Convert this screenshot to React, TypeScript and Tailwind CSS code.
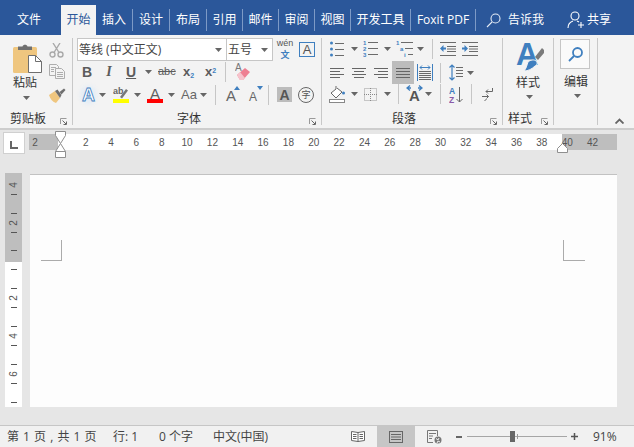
import type { ReactNode } from 'react';

const tabs = [
  { label: '插入', w: 'w-[37px]' },
  { label: '设计', w: 'w-[37px]' },
  { label: '布局', w: 'w-[37px]' },
  { label: '引用', w: 'w-[36px]' },
  { label: '邮件', w: 'w-[36px]' },
  { label: '审阅', w: 'w-[36px]' },
  { label: '视图', w: 'w-[36px]' },
  { label: '开发工具', w: 'w-[60px]' },
  { label: 'Foxit PDF', w: 'w-[65px]' },
];

const rulerNumbers = ['2', '', '2', '4', '6', '8', '10', '12', '14', '16', '18', '20', '22', '24', '26', '28', '30', '32', '34', '36', '38', '40', '42'];
const sideRuler = ['4', '-', '', '-', '2', '-', '', '-', '', '-', '', '-', '2', '-', '', '-', '4', '-', '', '-', '6', '-', '', '-'];

const BLUE = '#3f7fbf';
const GRAY = '#6b6b6b';

function Caret({ className = '' }: { className?: string }) {
  return (
    <svg width="7" height="4" viewBox="0 0 7 4" className={`shrink-0 ${className}`}>
      <path d="M0 0h7L3.5 4z" fill="#666" />
    </svg>
  );
}

function Sep({ className = '' }: { className?: string }) {
  return <div className={`w-px h-[20px] bg-[#c6c6c6] shrink-0 ${className}`} />;
}

function Launcher() {
  return (
    <svg width="7" height="7" viewBox="0 0 7 7" className="ml-auto mr-[5px] mt-[6px]">
      <path d="M.5 6V.5H6.5" fill="none" stroke="#9a9a9a" />
      <path d="M2.5 2.5 6 6M6.5 3.5v3h-3" fill="none" stroke="#666" />
    </svg>
  );
}

function GroupLabel({ text, pl }: { text: string; pl: string }) {
  return (
    <div className={`mt-auto -mb-px h-[15px] flex items-center text-[12px] leading-[15px] text-[#333] ${pl}`}>
      <span>{text}</span>
      <Launcher />
    </div>
  );
}

function Lines({ w, ys, xs, color = GRAY }: { w: number; ys: number[]; xs?: number[]; color?: string }) {
  return (
    <>
      {ys.map((y, i) => (
        <path key={i} d={`M${xs ? xs[i] : 0} ${y + 0.5}H${w}`} stroke={color} />
      ))}
    </>
  );
}

function Letter({ children, className = '' }: { children: ReactNode; className?: string }) {
  return <span className={`shrink-0 font-['Liberation_Sans',sans-serif] leading-none text-center ${className}`}>{children}</span>;
}

function PasteIcon() {
  return (
    <svg width="29" height="30" viewBox="0 0 29 30">
      <rect x="0" y="4" width="24" height="26" rx="1.5" fill="#efc67f" />
      <path d="M5 5V3.5h4.5C10 1 14 1 14.5 3.5H19V7H5z" fill="#6f6f6f" />
      <path d="M15.5 12.5h7l6 6v11h-13z" fill="#fff" stroke="#6f6f6f" />
      <path d="M22.5 12.5v6h6" fill="none" stroke="#6f6f6f" />
    </svg>
  );
}

function ScissorsIcon() {
  return (
    <svg width="15" height="15" viewBox="0 0 15 15" fill="none" stroke="#a9a9a9" strokeWidth="1.4">
      <circle cx="3.5" cy="11.5" r="2.5" />
      <circle cx="11.5" cy="11.5" r="2.5" />
      <path d="M5 9.5 11 0M10 9.5 4 0" />
    </svg>
  );
}

function CopyIcon() {
  return (
    <svg width="16" height="15" viewBox="0 0 16 15" fill="#f3f3f3" stroke="#adadad">
      <path d="M.5.5h7l2 2v9H.5z" />
      <path d="M6.5 4.5h6l3 3v7h-9z" />
      <path d="M2 3.5h5M2 5.5h3M2 7.5h3M8 8.5h6M8 10.5h6M8 12.5h6" strokeWidth="1" />
    </svg>
  );
}

function PainterIcon() {
  return (
    <svg width="17" height="15" viewBox="0 0 17 15">
      <path d="M0 7 6 3l5 7-4 5C4 14 1 11 0 7z" fill="#efc67f" />
      <path d="M6 3 8.5 1.5l4 5.5L11 10z" fill="#6f6f6f" />
      <path d="M10.5 4 15 .5l1.5 1.5-4 4.5z" fill="#6f6f6f" />
    </svg>
  );
}

function WordArtA() {
  return (
    <span className="w-[15px] h-[18px] shrink-0 relative flex items-center justify-center">
      <span className="absolute inset-0 rounded-full bg-[#e2ecf6] blur-[2px]" />
      <Letter className="relative text-[18px] font-bold text-white [-webkit-text-stroke:0.8px_#3f7fbf]">A</Letter>
    </span>
  );
}

function HighlightIcon() {
  return (
    <svg width="16" height="17" viewBox="0 0 16 17" className="shrink-0">
      <text x="0" y="8" fontSize="9" fontWeight="700" fill="#666" fontFamily="Liberation Sans">ab</text>
      <path d="M7 11 13 3l2 1.5-6 8z" fill="#777" />
      <rect x="0" y="13" width="16" height="4" fill="#ffff00" />
    </svg>
  );
}

function ColorA() {
  return (
    <span className="w-[16px] h-[17px] shrink-0 flex flex-col items-center">
      <Letter className="text-[15px] h-[13px] text-[#5f5f5f]">A</Letter>
      <span className="w-[16px] h-[4px] bg-[#ff0000]" />
    </span>
  );
}

function GrowA({ size, down }: { size: string; down?: boolean }) {
  return (
    <span className="relative w-[14px] h-[17px] shrink-0 flex items-end">
      <Letter className={`${size} text-[#666]`}>A</Letter>
      <svg width="6" height="4" viewBox="0 0 6 4" className="absolute right-0 top-0">
        <path d={down ? 'M0 0h6L3 4z' : 'M3 0l3 4H0z'} fill={BLUE} />
      </svg>
    </span>
  );
}

function EraserIcon() {
  return (
    <svg width="16" height="20" viewBox="0 0 16 20" className="shrink-0">
      <text x="0" y="9" fontSize="10" fill="#777" fontFamily="Liberation Sans">A</text>
      <path d="M2 13 10 6l5 4-7 8H5z" fill="#ee7f92" />
      <path d="M2 13l3 5h3l2-2-5-6z" fill="#f6c3cc" />
    </svg>
  );
}

function BulletsIcon() {
  return (
    <svg width="14" height="16" viewBox="0 0 14 16" className="shrink-0">
      <circle cx="1.5" cy="2" r="1.5" fill={BLUE} />
      <circle cx="1.5" cy="8" r="1.5" fill={BLUE} />
      <circle cx="1.5" cy="14" r="1.5" fill={BLUE} />
      <Lines w={14} ys={[2, 8, 14]} xs={[5, 5, 5]} />
    </svg>
  );
}

function NumberingIcon() {
  return (
    <svg width="15" height="17" viewBox="0 0 15 17" className="shrink-0" fontSize="6" fontWeight="700" fontFamily="Liberation Sans" fill={BLUE}>
      <text x="0" y="5">1</text>
      <text x="0" y="11">2</text>
      <text x="0" y="17">3</text>
      <Lines w={15} ys={[2, 8, 14]} xs={[5, 5, 5]} />
    </svg>
  );
}

function MultilevelIcon() {
  return (
    <svg width="17" height="17" viewBox="0 0 17 17" className="shrink-0" fontSize="6" fontWeight="700" fontFamily="Liberation Sans" fill={BLUE}>
      <text x="0" y="5">1</text>
      <text x="4" y="11">a</text>
      <text x="8" y="17">i</text>
      <Lines w={17} ys={[2, 8, 14]} xs={[5, 9, 12]} />
    </svg>
  );
}

function IndentIcon({ flip }: { flip?: boolean }) {
  return (
    <svg width="16" height="14" viewBox="0 0 16 14" className="shrink-0">
      <Lines w={16} ys={[0, 13]} />
      <Lines w={16} ys={[4, 6.5, 9]} xs={[7, 7, 7]} />
      <path d={flip ? 'M6 6.5 2.5 3v2.5H0v2h2.5V10z' : 'M0 6.5 3.5 3v2.5H6v2H3.5V10z'} fill={BLUE} />
    </svg>
  );
}

function AlignIcon({ xs }: { xs: number[] }) {
  return (
    <svg width="14" height="12" viewBox="0 0 14 12" className="shrink-0">
      <path d={`M${xs[0]} 1.5H${xs[1]}M${xs[2]} 4.5H${xs[3]}M${xs[0]} 7.5H${xs[1]}M${xs[2]} 10.5H${xs[3]}`} stroke="#666" />
    </svg>
  );
}

function DistributedIcon() {
  return (
    <svg width="16" height="17" viewBox="0 0 16 17" className="shrink-0">
      <path d="M.5 0v17M15.5 0v17" stroke={BLUE} />
      <path d="M3 3.5h10M3 3.5l2-2M3 3.5l2 2M13 3.5l-2-2M13 3.5l-2 2" stroke={BLUE} fill="none" />
      <Lines w={14} ys={[7, 9, 11, 13, 15]} xs={[2, 2, 2, 2, 2]} />
    </svg>
  );
}

function SpacingIcon() {
  return (
    <svg width="14" height="17" viewBox="0 0 14 17" className="shrink-0">
      <path d="M3 1v15M.5 3.5 3 1l2.5 2.5M.5 13.5 3 16l2.5-2.5" stroke={BLUE} fill="none" strokeWidth="1.2" />
      <Lines w={14} ys={[3, 6, 9, 12]} xs={[7, 7, 7, 7]} />
    </svg>
  );
}

function ShadingIcon() {
  return (
    <svg width="16" height="17" viewBox="0 0 16 17" className="shrink-0">
      <path d="M7 0v3L2 7l5 5 6-6-5-4" fill="#fff" stroke="#666" />
      <circle cx="14.5" cy="7" r="1.5" fill={BLUE} />
      <rect x=".5" y="13.5" width="15" height="3" fill="#fff" stroke="#888" />
    </svg>
  );
}

function BorderIcon() {
  return (
    <svg width="13" height="13" viewBox="0 0 13 13" className="shrink-0">
      <rect x=".5" y=".5" width="12" height="12" fill="none" stroke="#999" strokeDasharray="1 1" />
      <path d="M6.5 0v13M0 6.5h13" stroke="#888" strokeDasharray="1 1" />
    </svg>
  );
}

function TextDirIcon() {
  return (
    <span className="relative w-[17px] h-[18px] shrink-0 flex justify-center items-end">
      <Letter className="text-[15px] font-bold text-[#555]">A</Letter>
      <svg width="17" height="7" viewBox="0 0 17 7" className="absolute top-0 left-0" fill="none" stroke={BLUE} strokeWidth="1.3">
        <path d="M4 .5 1 3l3 2.5M1 3h4M13 .5 16 3l-3 2.5M16 3h-4" />
      </svg>
    </span>
  );
}

function SortIcon() {
  return (
    <svg width="14" height="17" viewBox="0 0 14 17" className="shrink-0" fontSize="8.5" fontWeight="700" fontFamily="Liberation Sans">
      <text x="0" y="8" fill={BLUE}>A</text>
      <text x="0" y="16.5" fill="#8a5aa8">Z</text>
      <path d="M10.5 1v15M7.5 13l3 3 3-3" stroke="#666" fill="none" />
    </svg>
  );
}

function ParaMarkIcon() {
  return (
    <svg width="11" height="13" viewBox="0 0 11 13" className="shrink-0" fill="none" stroke="#666">
      <path d="M10.5 0v3.5H4M6 1.5 4 3.5l2 2" />
      <path d="M0 8.5h6.5M4.5 6.5l2 2-2 2M2.5 13l2-2" />
    </svg>
  );
}

function StylesIcon() {
  return (
    <span className="relative block w-[28px] h-[30px]">
      <Letter className="absolute left-0 top-[-3px] text-[31px] font-bold text-[#3f7fbf]">A</Letter>
      <svg width="28" height="30" viewBox="0 0 28 30" className="absolute inset-0">
        <path d="M19 15 26 6l2 2v3l-6 7z" fill="#7a7a7a" />
        <path d="M12 20c2-2 6-3 8-1s1 4-1 5c-3 3-7 5-11 5 2-2 3-6 4-9z" fill="#3f7fbf" stroke="#f3f3f3" />
      </svg>
    </span>
  );
}

function SearchGlyph({ color, width = 1.6 }: { color: string; width?: number }) {
  return (
    <svg width="15" height="15" viewBox="0 0 15 15" fill="none" stroke={color} strokeWidth={width} className="shrink-0">
      <circle cx="9.5" cy="5.5" r="4.5" />
      <path d="M6 9 1 14" />
    </svg>
  );
}

function PersonPlus() {
  return (
    <svg width="18" height="18" viewBox="0 0 18 18" fill="none" stroke="#fff" strokeWidth="1.1" className="shrink-0">
      <circle cx="8" cy="5" r="4" />
      <path d="M1 17c0-4 2-6 5-7M10 10l2 1M14 11v6M11 14h6" />
    </svg>
  );
}

function Ribbon() {
  return (
    <div className="h-[95px] bg-[#f3f3f3] border-b-2 border-[#cdcdcd] flex items-start pt-[3px] text-[#444]">
      <div className="w-[73px] h-[87px] border-r border-[#c8c8c8] flex flex-col shrink-0">
        <div className="flex">
          <div className="w-[49px] pl-[13px] pt-[5px] flex flex-col">
            <PasteIcon />
            <span className="text-[12px] leading-[15px] mt-[2px] text-[#333]">粘贴</span>
            <Caret className="ml-[10px] mt-[6px]" />
          </div>
          <div className="flex flex-col pt-[5px] gap-[6px]">
            <ScissorsIcon />
            <CopyIcon />
            <div className="mt-[3px]">
              <PainterIcon />
            </div>
          </div>
        </div>
        <GroupLabel text="剪贴板" pl="pl-[10px]" />
      </div>

      <div className="w-[249px] h-[87px] border-r border-[#c8c8c8] flex flex-col shrink-0">
        <div className="flex items-center pl-[4px] h-[23px]">
          <div className="w-[150px] h-[23px] bg-white border border-[#c6c6c6] flex items-center pl-[1px] pr-[4px] text-[12px] text-[#444]">
            <span>等线 (中文正文)</span>
            <Caret className="ml-auto" />
          </div>
          <div className="w-[47px] h-[23px] -ml-px bg-white border border-[#c6c6c6] flex items-center pl-[1px] pr-[4px] text-[12px] text-[#444]">
            <span>五号</span>
            <Caret className="ml-auto" />
          </div>
          <div className="w-[16px] ml-[4px] flex flex-col items-center text-[#555]">
            <span className="h-[10px] text-[9px] leading-[10px] font-['Liberation_Sans',sans-serif]">wén</span>
            <span className="h-[13px] text-[9px] leading-[13px] text-[#3f7fbf] font-bold">文</span>
          </div>
          <div className="w-[16px] h-[15px] ml-[6px] border border-[#3f7fbf] flex items-center justify-center">
            <Letter className="text-[13px] text-[#555]">A</Letter>
          </div>
        </div>
        <div className="flex items-center h-[19px] mt-[1px] pl-[9px] text-[#5c5c5c]">
          <Letter className="w-[10px] text-[14px] font-bold">B</Letter>
          <Letter className="w-[8px] ml-[13px] text-[14px] italic font-['Liberation_Serif',serif] font-bold">I</Letter>
          <Letter className="w-[10px] ml-[13px] text-[14px] font-bold underline">U</Letter>
          <Caret className="ml-[9px]" />
          <Letter className="w-[16px] ml-[6px] text-[11px] line-through">abc</Letter>
          <Letter className="w-[13px] ml-[8px] text-[13px] font-bold">
            x<sub className="text-[7px] text-[#3f7fbf]">2</sub>
          </Letter>
          <Letter className="w-[13px] ml-[9px] text-[13px] font-bold">
            x<sup className="text-[7px] text-[#3f7fbf]">2</sup>
          </Letter>
          <Sep className="ml-[8px]" />
          <div className="ml-[9px]">
            <EraserIcon />
          </div>
        </div>
        <div className="flex items-center h-[19px] mt-[4px] pl-[8px]">
          <WordArtA />
          <Caret className="ml-[3px]" />
          <div className="ml-[7px]">
            <HighlightIcon />
          </div>
          <Caret className="ml-[5px]" />
          <div className="ml-[6px]">
            <ColorA />
          </div>
          <Caret className="ml-[5px]" />
          <Letter className="w-[15px] ml-[6px] text-[13px] text-[#666]">Aa</Letter>
          <Caret className="ml-[4px]" />
          <Sep className="ml-[8px]" />
          <div className="ml-[10px]">
            <GrowA size="text-[15px]" />
          </div>
          <div className="ml-[9px]">
            <GrowA size="text-[12px]" down />
          </div>
          <Sep className="ml-[5px]" />
          <div className="w-[15px] h-[15px] ml-[8px] bg-[#bcbcbc] flex items-center justify-center">
            <Letter className="text-[14px] font-bold text-[#555]">A</Letter>
          </div>
          <div className="w-[16px] h-[16px] ml-[6px] rounded-full border border-[#666] flex items-center justify-center text-[9px] text-[#555]">字</div>
        </div>
        <GroupLabel text="字体" pl="pl-[104px]" />
      </div>

      <div className="w-[181px] h-[87px] border-r border-[#c8c8c8] flex flex-col shrink-0">
        <div className="flex items-center h-[17px] mt-[2px] pl-[8px]">
          <BulletsIcon />
          <Caret className="ml-[7px]" />
          <div className="ml-[5px]">
            <NumberingIcon />
          </div>
          <Caret className="ml-[6px]" />
          <div className="ml-[5px]">
            <MultilevelIcon />
          </div>
          <Caret className="ml-[4px]" />
          <Sep className="ml-[8px]" />
          <div className="ml-[7px]">
            <IndentIcon />
          </div>
          <div className="ml-[6px]">
            <IndentIcon flip />
          </div>
        </div>
        <div className="flex items-center h-[23px] mt-[4px] pl-[8px]">
          <AlignIcon xs={[0, 14, 0, 10]} />
          <div className="ml-[8px]">
            <AlignIcon xs={[0, 14, 2, 12]} />
          </div>
          <div className="ml-[8px]">
            <AlignIcon xs={[0, 14, 4, 14]} />
          </div>
          <div className="w-[22px] h-[23px] ml-[4px] bg-[#bcbcbc] flex items-center justify-center">
            <AlignIcon xs={[0, 14, 0, 14]} />
          </div>
          <div className="ml-[3px]">
            <DistributedIcon />
          </div>
          <Sep className="ml-[7px]" />
          <div className="ml-[8px]">
            <SpacingIcon />
          </div>
          <Caret className="ml-[4px]" />
        </div>
        <div className="flex items-center h-[20px] pl-[7px]">
          <ShadingIcon />
          <Caret className="ml-[6px]" />
          <div className="ml-[6px]">
            <BorderIcon />
          </div>
          <Caret className="ml-[7px]" />
          <Sep className="ml-[7px]" />
          <div className="ml-[7px]">
            <TextDirIcon />
          </div>
          <Caret className="ml-[2px]" />
          <Sep className="ml-[8px]" />
          <div className="ml-[8px]">
            <SortIcon />
          </div>
          <Sep className="ml-[8px]" />
          <div className="ml-[10px]">
            <ParaMarkIcon />
          </div>
        </div>
        <GroupLabel text="段落" pl="pl-[70px]" />
      </div>

      <div className="w-[51px] h-[87px] border-r border-[#c8c8c8] flex flex-col shrink-0">
        <div className="pl-[13px] pt-[4px]">
          <StylesIcon />
          <span className="block text-[12px] leading-[15px] mt-[3px] text-[#333]">样式</span>
          <Caret className="ml-[10px] mt-[5px]" />
        </div>
        <GroupLabel text="样式" pl="pl-[5px]" />
      </div>

      <div className="w-[44px] h-[87px] border-r border-[#c8c8c8] flex flex-col items-start shrink-0 pl-[6px]">
        <div className="w-[30px] h-[30px] mt-[1px] border border-[#c6c6c6] bg-[#fafafa] flex items-center justify-center">
          <SearchGlyph color="#3f7fbf" width={1.8} />
        </div>
        <span className="block text-[12px] leading-[15px] mt-[5px] ml-[4px] text-[#333]">编辑</span>
        <Caret className="ml-[14px] mt-[5px]" />
      </div>

      <div className="flex-1 h-[87px] flex items-end justify-end pr-[10px] pb-[1px]">
        <svg width="9" height="6" viewBox="0 0 9 6" fill="none" stroke="#666" strokeWidth="1.8">
          <path d="M.5 5.5 4.5 1.5l4 4" />
        </svg>
      </div>
    </div>
  );
}

function Rulers() {
  return (
    <div className="flex pl-[3px]">
      <div className="w-[22px] h-[22px] bg-white border border-[#d0d0d0] flex items-end justify-center pb-[4px] shrink-0">
        <span className="w-[8px] h-[8px] border-l-2 border-b-2 border-[#666]" />
      </div>
      <div className="relative ml-[4px] mt-[2px] w-[588px] h-[16px] bg-[linear-gradient(90deg,#bebebe_29px,#fff_29px,#fff_533px,#bebebe_533px)]">
        <div className="flex h-full items-center -ml-[6.7px] text-[10px] text-[#555] font-['Liberation_Sans',sans-serif]">
          {rulerNumbers.map((n, i) => (
            <span key={i} className="w-[25.35px] shrink-0 text-center">{n}</span>
          ))}
        </div>
        <svg width="11" height="28" viewBox="0 0 11 28" className="absolute left-[26px] top-[-3px]" fill="#fff" stroke="#8f8f8f">
          <path d="M.5.5h10v4l-5 8-5-8z" />
          <path d="M5.5 12.5l5 8v6H.5v-6z" />
          <path d="M.5 20.5h10" />
        </svg>
        <svg width="11" height="10" viewBox="0 0 11 10" className="absolute left-[528px] top-[9px]" fill="#fff" stroke="#8f8f8f">
          <path d="M5.5.5l5 5v4H.5v-4z" />
        </svg>
      </div>
    </div>
  );
}

function Workspace() {
  return (
    <div className="flex-1 min-h-0 bg-[#e6e6e6] pt-[2px]">
      <Rulers />
      <div className="flex pl-[5px] mt-[19px]">
        <div className="w-[17px] h-[234px] pt-[7px] bg-[linear-gradient(#bebebe_89px,#fff_89px)] flex flex-col items-center text-[10px] text-[#555] font-['Liberation_Sans',sans-serif] shrink-0">
          {sideRuler.map((n, i) => (
            <div key={i} className="h-[9.5px] flex items-center justify-center">
              {n === '-' ? <span className="w-[6px] h-px bg-[#555]" /> : n ? <span className="-rotate-90 leading-none">{n}</span> : null}
            </div>
          ))}
        </div>
        <div className="ml-[8px] mt-px w-[587px] h-[233px] bg-[#fdfdfd] border-t border-[#c2c2c2] pt-[65px] pl-[11px] pr-[32px] flex justify-between items-start">
          <div className="w-[21px] h-[21px] border-r border-b border-[#ababab]" />
          <div className="w-[22px] h-[21px] border-l border-b border-[#ababab]" />
        </div>
      </div>
    </div>
  );
}

function StatusBar() {
  return (
    <div className="h-[22px] shrink-0 bg-[#f1f1f1] border-t border-[#c6c6c6] flex items-center text-[12px] text-[#444]">
      <span className="ml-[7px] w-[106px] whitespace-nowrap [word-spacing:1px]">第 1 页 , 共 1 页</span>
      <span className="w-[46px] whitespace-nowrap">行: 1</span>
      <span className="w-[54px] whitespace-nowrap">0 个字</span>
      <span className="w-[138px] whitespace-nowrap">中文(中国)</span>
      <svg width="14" height="13" viewBox="0 0 14 13" fill="#fff" stroke="#666" className="shrink-0">
        <path d="M.5 1.5 7 2.5l6.5-1v9L7 11.5l-6.5-1zM7 2.5v9" />
        <path d="M2 4.5h3.5M2 6.5h3.5M2 8.5h3.5M8.5 4.5H12M8.5 6.5H12M8.5 8.5H12" />
      </svg>
      <div className="ml-[12px] w-[38px] h-[21px] bg-[#c6c6c6] flex items-center justify-center shrink-0">
        <svg width="14" height="12" viewBox="0 0 14 12" fill="none" stroke="#666">
          <rect x=".5" y=".5" width="13" height="11" />
          <path d="M2 3.5h10M2 6h10M2 8.5h10" />
        </svg>
      </div>
      <svg width="15" height="14" viewBox="0 0 15 14" fill="none" stroke="#777" className="ml-[12px] shrink-0">
        <path d="M6 12.5H.5V.5h10V6M2 3.5h7M2 6h4M2 8.5h3" />
        <circle cx="11" cy="10" r="3.5" fill="#777" stroke="none" />
        <path d="M9 8.5l2 1.5 1-2M10 13l1-2 2 1" stroke="#f1f1f1" />
      </svg>
      <span className="ml-[14px] w-[6px] h-[2px] bg-[#666] shrink-0" />
      <div className="relative ml-[5px] w-[100px] h-px bg-[#a6a6a6] shrink-0">
        <span className="absolute left-[43px] top-[-5px] w-[5px] h-[11px] bg-[#666]" />
        <span className="absolute left-[50px] top-[-2px] w-px h-[5px] bg-[#999]" />
      </div>
      <svg width="7" height="7" viewBox="0 0 7 7" className="ml-[4px] shrink-0">
        <path d="M3.5 0v7M0 3.5h7" stroke="#555" strokeWidth="1.5" />
      </svg>
      <span className="ml-[15px] text-[12px]">91%</span>
    </div>
  );
}

export default function App() {
  return (
    <div className="w-[634px] h-[447px] flex flex-col overflow-hidden bg-[#e6e6e6] font-['Open_Sans','Noto_Sans_CJK_SC',sans-serif]">
      <div className="h-[35px] bg-[#2b579a] flex items-end text-white text-[12px] shrink-0">
        <div className="w-[58px] h-[30px] flex items-center justify-center shrink-0">文件</div>
        <div className="ml-[3px] w-[35px] h-[30px] bg-[#f3f3f3] text-[#2b579a] flex items-center justify-center shrink-0">开始</div>
        {tabs.map((t) => (
          <div key={t.label} className={`${t.w} h-[30px] flex items-center shrink-0`}>
            <span className="flex-1 text-center whitespace-nowrap">{t.label}</span>
            <span className="w-px h-[22px] bg-[#7d9ac6]" />
          </div>
        ))}
        <div className="h-[30px] ml-[10px] flex items-center shrink-0">
          <SearchGlyph color="#e4ebf5" width={1.1} />
          <span className="ml-[7px]">告诉我</span>
          <div className="ml-[23px]">
            <PersonPlus />
          </div>
          <span className="ml-[2px]">共享</span>
        </div>
      </div>
      <Ribbon />
      <Workspace />
      <StatusBar />
    </div>
  );
}
